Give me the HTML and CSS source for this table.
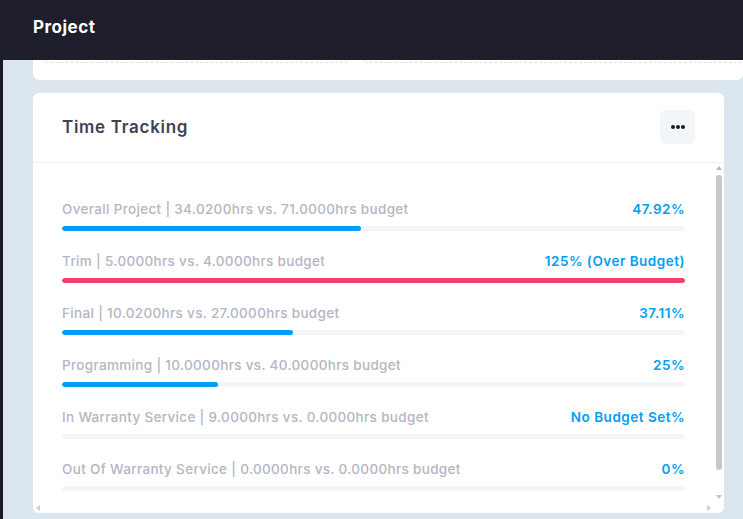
FILE: index.html
```html
<!DOCTYPE html>
<html lang="en">
<head>
<meta charset="utf-8">
<title>Project</title>
<link rel="stylesheet" href="styles.css">
</head>
<body>
<header class="topbar">
  <h1 class="page-title">Project</h1>
</header>
<div class="shell">
  <main class="content">
    <section class="card card-prev">
      <div class="dash-box"></div>
      <div class="dash-box dash-box-wide"></div>
    </section>
    <section class="card tt-card">
      <div class="card-header">
        <h2 class="card-title">Time Tracking</h2>
        <button class="more-btn" type="button" aria-label="More">
          <span class="dot"></span><span class="dot"></span><span class="dot"></span>
        </button>
      </div>
      <div class="tt-body">
        <div class="tt-main">
          <div class="tt-scroll">
            <div class="tt-row">
              <div class="tt-line"><span class="tt-label">Overall Project | 34.0200hrs vs. 71.0000hrs budget</span><span class="tt-pct">47.92%</span></div>
              <div class="bar"><div class="bar-fill" style="width:47.92%"></div></div>
            </div>
            <div class="tt-row">
              <div class="tt-line"><span class="tt-label">Trim | 5.0000hrs vs. 4.0000hrs budget</span><span class="tt-pct">125% (Over Budget)</span></div>
              <div class="bar"><div class="bar-fill bar-fill-danger" style="width:100%"></div></div>
            </div>
            <div class="tt-row">
              <div class="tt-line"><span class="tt-label">Final | 10.0200hrs vs. 27.0000hrs budget</span><span class="tt-pct">37.11%</span></div>
              <div class="bar"><div class="bar-fill" style="width:37.11%"></div></div>
            </div>
            <div class="tt-row">
              <div class="tt-line"><span class="tt-label">Programming | 10.0000hrs vs. 40.0000hrs budget</span><span class="tt-pct">25%</span></div>
              <div class="bar"><div class="bar-fill" style="width:25%"></div></div>
            </div>
            <div class="tt-row">
              <div class="tt-line"><span class="tt-label">In Warranty Service | 9.0000hrs vs. 0.0000hrs budget</span><span class="tt-pct">No Budget Set%</span></div>
              <div class="bar"><div class="bar-fill" style="width:0%"></div></div>
            </div>
            <div class="tt-row">
              <div class="tt-line"><span class="tt-label">Out Of Warranty Service | 0.0000hrs vs. 0.0000hrs budget</span><span class="tt-pct">0%</span></div>
              <div class="bar"><div class="bar-fill" style="width:0%"></div></div>
            </div>
          </div>
          <div class="vbar" aria-hidden="true">
            <div class="sb-btn sb-up"><span class="tri tri-up"></span></div>
            <div class="vtrack"><div class="vthumb"></div></div>
            <div class="sb-btn sb-down"><span class="tri tri-down"></span></div>
          </div>
        </div>
        <div class="hbar" aria-hidden="true">
          <div class="sb-hbtn"><span class="tri tri-left"></span></div>
          <div class="htrack"></div>
          <div class="sb-hbtn"><span class="tri tri-right"></span></div>
          <div class="sb-corner"></div>
        </div>
      </div>
    </section>
  </main>
</div>
</body>
</html>
```
FILE: styles.css
```css
* { box-sizing: border-box; }
html, body { margin: 0; padding: 0; }
body {
  background: #dbe6ee;
  font-family: Inter, "Noto Sans", sans-serif;
  width: 743px;
  height: 519px;
  overflow: hidden;
}
.topbar {
  height: 60px;
  background: #1e1e2d;
  display: flex;
  align-items: center;
  padding: 0 0 6px 33px;
}
.page-title {
  margin: 0;
  color: #ffffff;
  font-size: 17px;
  font-weight: 700;
  letter-spacing: 0.5px;
}
.shell {
  border-left: 3px solid #1a1a26;
  height: 459px;
}
.content {
  padding-left: 30px;
}
.card {
  background: #ffffff;
  border-radius: 6px;
}
.card-prev {
  height: 20px;
  border-top-left-radius: 0;
  border-top-right-radius: 0;
  display: flex;
  gap: 16px;
  padding: 0 0 0 12px;
  overflow: hidden;
}
.dash-box {
  flex: none;
  width: 303px;
  height: 3px;
  border: 1px dashed #dfe2e8;
  border-top: none;
  border-radius: 0 0 6px 6px;
}
.dash-box-wide { width: 400px; }
.tt-card {
  margin-top: 13px;
  width: 691px;
  height: 420px;
  display: flex;
  flex-direction: column;
  overflow: hidden;
}
.card-header {
  height: 70px;
  flex: none;
  border-bottom: 1px solid #eff2f5;
  display: flex;
  align-items: center;
  justify-content: space-between;
  padding: 0 29px 2px;
}
.card-title {
  margin: 0;
  font-size: 17px;
  font-weight: 600;
  letter-spacing: 0.7px;
  color: #3f4254;
}
.more-btn {
  width: 35px;
  height: 34px;
  border: none;
  border-radius: 6px;
  background: #f3f6f9;
  display: flex;
  align-items: center;
  justify-content: center;
  gap: 1px;
  padding: 0;
}
.dot {
  width: 4px;
  height: 4px;
  border-radius: 50%;
  background: #181c32;
}
.tt-body {
  flex: 1;
  min-height: 0;
  display: flex;
  flex-direction: column;
}
.tt-main {
  flex: 1;
  min-height: 0;
  display: flex;
}
.tt-scroll {
  flex: 1;
  min-width: 0;
  overflow: hidden;
  padding: 36px 29px 0 29px;
}
.tt-row {
  margin-bottom: 20px;
}
.tt-line {
  display: flex;
  justify-content: space-between;
  align-items: center;
  height: 20px;
  margin-bottom: 7px;
  white-space: nowrap;
}
.tt-label {
  font-size: 13.5px;
  font-weight: 500;
  letter-spacing: 0.33px;
  color: #b5b5c3;
}
.tt-pct {
  font-size: 13.5px;
  font-weight: 600;
  letter-spacing: 0.5px;
  color: #009ef7;
}
.bar {
  height: 5px;
  border-radius: 3px;
  background: #f3f6f9;
  overflow: hidden;
}
.bar-fill {
  height: 100%;
  border-radius: 3px;
  background: #009ef7;
}
.bar-fill-danger { background: #f1416c; }

/* scrollbars */
.vbar {
  width: 10px;
  flex: none;
  display: flex;
  flex-direction: column;
}
.sb-btn {
  height: 12px;
  flex: none;
  padding-left: 2px;
}
.sb-up { padding-top: 3px; }
.sb-down { padding-top: 4px; }
.vtrack {
  flex: 1;
  padding: 0 2px;
}
.vthumb {
  width: 6px;
  height: 295px;
  border-radius: 3px;
  background: #c8c8c8;
}
.hbar {
  height: 10px;
  flex: none;
  display: flex;
  align-items: center;
}
.sb-hbtn {
  width: 10px;
  height: 10px;
  flex: none;
  display: flex;
  align-items: center;
  justify-content: center;
}
.htrack { flex: 1; }
.sb-corner { width: 10px; flex: none; }
.tri {
  display: block;
  width: 0;
  height: 0;
}
.tri-up {
  border-left: 3px solid transparent;
  border-right: 3px solid transparent;
  border-bottom: 4px solid #b9b9b9;
}
.tri-down {
  border-left: 3px solid transparent;
  border-right: 3px solid transparent;
  border-top: 4px solid #c2c2c2;
}
.tri-left {
  border-top: 3px solid transparent;
  border-bottom: 3px solid transparent;
  border-right: 4px solid #cccccc;
}
.tri-right {
  border-top: 3px solid transparent;
  border-bottom: 3px solid transparent;
  border-left: 4px solid #cccccc;
}
```
